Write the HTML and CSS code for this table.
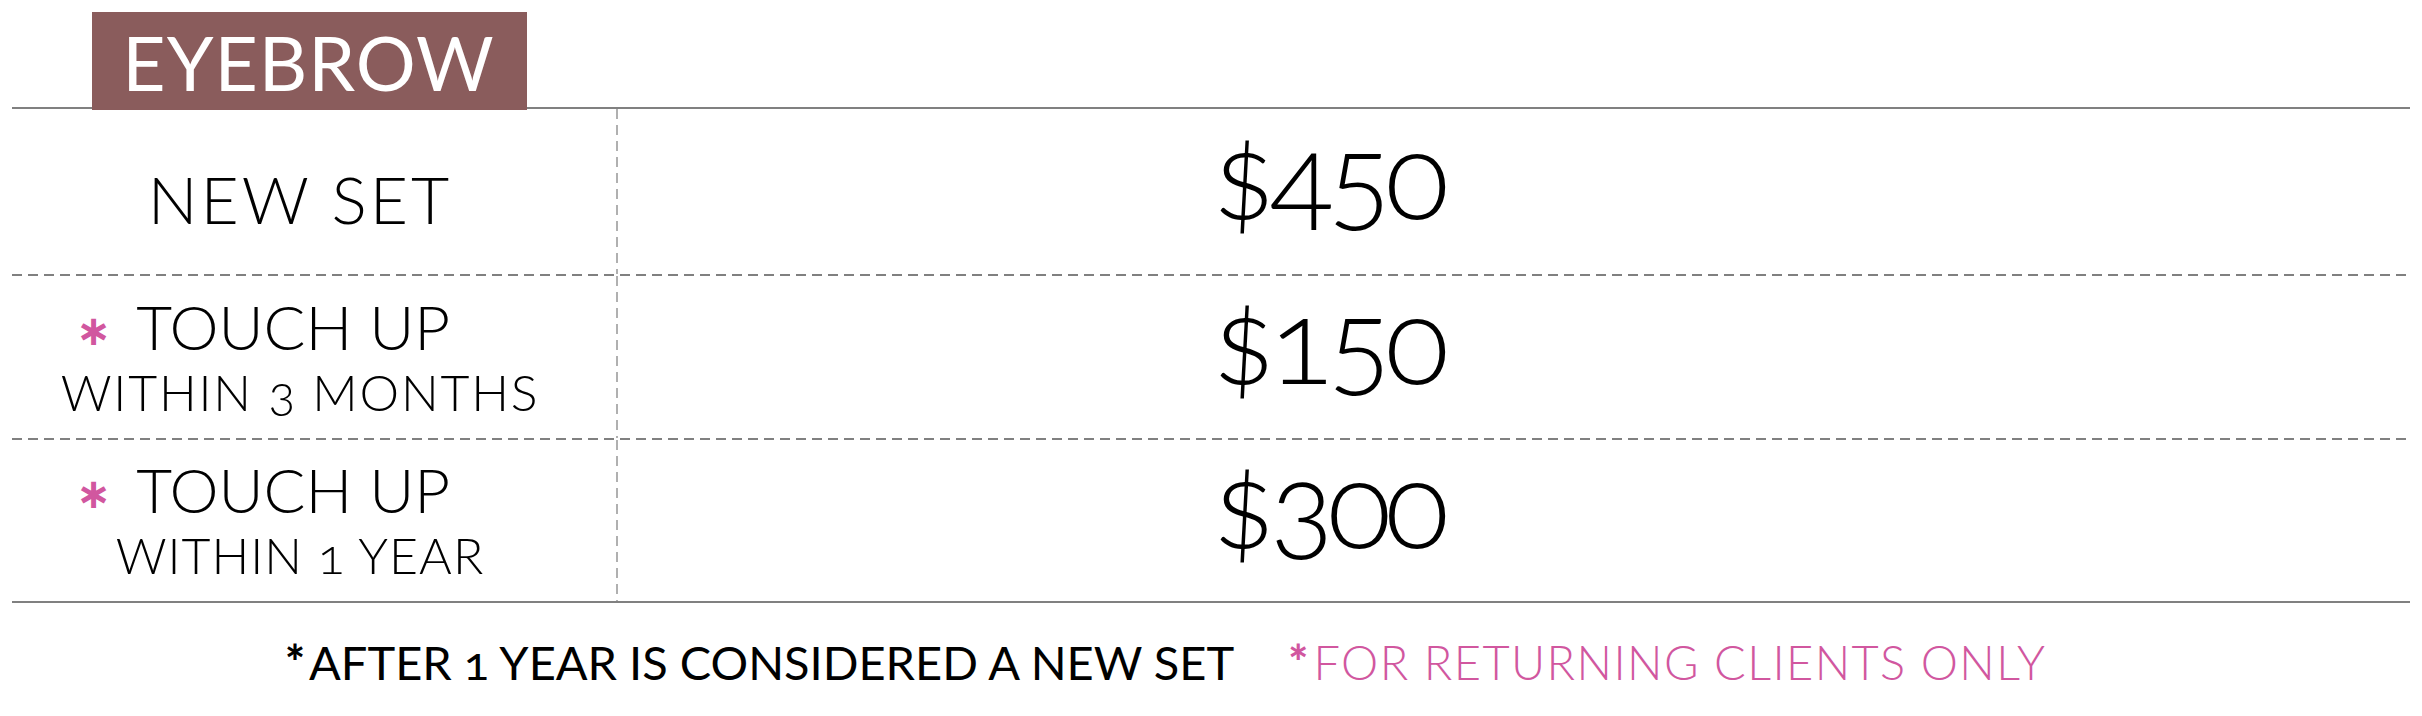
FILE: index.html
```html
<!DOCTYPE html>
<html lang="en">
<head>
<meta charset="utf-8">
<title>Eyebrow pricing</title>
<link rel="stylesheet" href="styles.css">
</head>
<body>
<main class="price-card">
  <div class="badge">EYEBROW</div>
  <section class="table">
    <div class="row row-first">
      <div class="label label-single"><span class="main main-new">NEW SET</span></div>
      <div class="price">$450</div>
    </div>
    <div class="sep"></div>
    <div class="row row-mid">
      <div class="label">
        <span class="main main-star"><span class="star">∗</span>TOUCH UP</span>
        <span class="sub sub-months">WITHIN 3 MONTHS</span>
      </div>
      <div class="price">$150</div>
    </div>
    <div class="sep"></div>
    <div class="row row-last">
      <div class="label">
        <span class="main main-star"><span class="star">∗</span>TOUCH UP</span>
        <span class="sub">WITHIN 1 YEAR</span>
      </div>
      <div class="price">$300</div>
    </div>
  </section>
  <footer class="notes">
    <p class="note"><span class="note-star">*</span>AFTER 1 YEAR IS CONSIDERED A NEW SET</p>
    <p class="note pink"><span class="note-star">*</span>FOR RETURNING CLIENTS ONLY</p>
  </footer>
</main>
</body>
</html>
```

FILE: styles.css
```css
html, body {
  margin: 0;
  padding: 0;
  background: #ffffff;
}

body {
  width: 2422px;
  height: 716px;
  overflow: hidden;
  font-family: "Lato", "Liberation Sans", sans-serif;
  color: #000;
  font-variant-numeric: oldstyle-nums;
}

.price-card {
  padding: 12px 12px 0 12px;
}

.badge {
  position: relative;
  z-index: 1;
  width: 435px;
  height: 98px;
  margin-left: 80px;
  margin-bottom: -3px;
  background: #8a5c5c;
  color: #fff;
  font-weight: 400;
  font-size: 75px;
  letter-spacing: 1px;
  line-height: 100px;
  text-align: center;
  box-sizing: border-box;
  padding-right: 2px;
}

.table {
  border-top: 2px solid #808080;
  border-bottom: 2px solid #808080;
}

.row {
  display: grid;
  grid-template-columns: 606px 1fr;
  height: 162px;
}

.row-first {
  height: 165px;
}

.row-last {
  height: 161px;
}

.sep {
  height: 2px;
  background: repeating-linear-gradient(to right, #808080 0 10px, transparent 10px 16px);
}

.label {
  display: flex;
  flex-direction: column;
  align-items: center;
  justify-content: center;
  padding-right: 30px;
  background: repeating-linear-gradient(to bottom, #b0b0b0 0 10px, transparent 10px 16px) right top / 2px 100% no-repeat;
  font-weight: 300;
}

.label-single {
  padding-top: 14px;
}

.main {
  font-size: 62px;
  line-height: 64px;
  letter-spacing: 0;
}

.main-star {
  padding-right: 74px;
}

.main-new {
  font-size: 66px;
  letter-spacing: 3px;
}

.sub {
  font-size: 50px;
  line-height: 58px;
  letter-spacing: 1px;
}

.sub-months {
  letter-spacing: 1.8px;
}

.star {
  font-family: "DejaVu Sans", sans-serif;
  color: #d1579f;
  font-weight: 700;
  font-size: 42px;
  vertical-align: 5px;
  margin-right: 25px;
}

.price {
  display: flex;
  align-items: center;
  padding-left: 594px;
  padding-bottom: 36px;
  font-size: 118px;
  letter-spacing: -6px;
  font-weight: 300;
  line-height: 1;
}

.notes {
  display: flex;
  gap: 54px;
  padding-left: 273px;
  margin-top: 34px;
}

.note {
  margin: 0;
  font-size: 47px;
  line-height: 50px;
  font-weight: 400;
}

.note.pink {
  color: #d1579f;
  font-weight: 300;
  letter-spacing: 1.4px;
}

.note-star {
  font-weight: 900;
  margin-right: 4px;
}
```
